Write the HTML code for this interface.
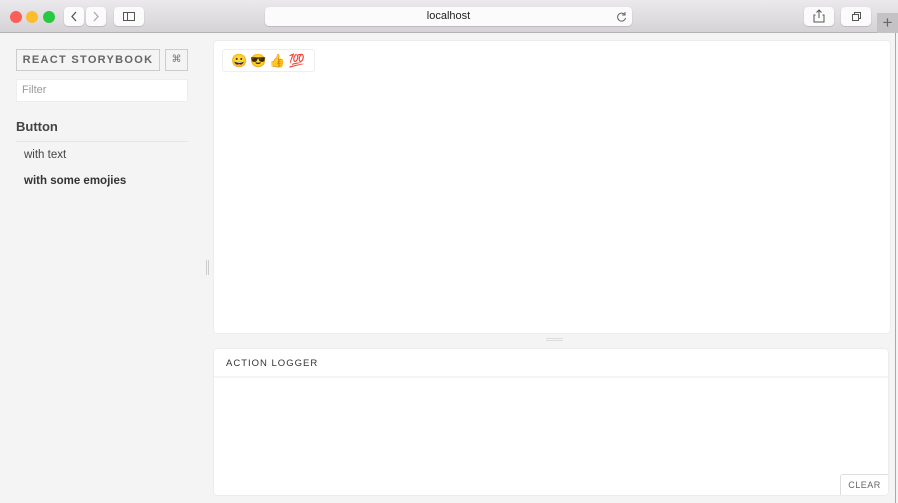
<!DOCTYPE html>
<html><head><style>
*{box-sizing:border-box;margin:0;padding:0}
body{width:898px;height:503px;overflow:hidden;background:#f4f4f4;font-family:"Liberation Sans",sans-serif;position:relative}
.tb{position:absolute;left:0;top:0;width:898px;height:33px;background:linear-gradient(#ebe9eb,#d5d3d5);border-bottom:1px solid #b4b2b4}
.dot{position:absolute;top:11px;width:12px;height:12px;border-radius:50%}
.btn{position:absolute;top:7px;height:19px;background:#fbfbfb;border-radius:4px;box-shadow:0 0.5px 1px rgba(0,0,0,.25)}
.abs{position:absolute}
</style></head><body>
<div class="tb">
<div class="dot" style="left:10px;background:#fc5f57"></div>
<div class="dot" style="left:26px;background:#fdbc2e"></div>
<div class="dot" style="left:43px;background:#28c840"></div>
<div class="btn" style="left:64px;width:20px"><svg width="20" height="19"><path d="M12 5l-4 4.5 4 4.5" stroke="#555" stroke-width="1.3" fill="none"/></svg></div>
<div class="btn" style="left:86px;width:20px"><svg width="20" height="19"><path d="M8 5l4 4.5-4 4.5" stroke="#aaa" stroke-width="1.3" fill="none"/></svg></div>
<div class="btn" style="left:114px;width:30px"><svg width="30" height="19"><rect x="9.5" y="5.5" width="11" height="8" fill="none" stroke="#555"/><line x1="13.5" y1="5.5" x2="13.5" y2="13.5" stroke="#555"/></svg></div>
<div class="btn" style="left:265px;width:367px;font-size:11px;text-align:center;line-height:19px;color:#222">localhost
<svg class="abs" style="right:4px;top:3px" width="13" height="13"><path d="M10 5A4 4 0 1 0 10.5 8" stroke="#666" fill="none"/><path d="M10 2v3h-3" stroke="#666" fill="none"/></svg></div>
<div class="btn" style="left:804px;width:30px"><svg width="30" height="19"><path d="M11.5 8h-1.5v7h10v-7h-1.5M15 3v8M12.5 5.5L15 3l2.5 2.5" stroke="#555" fill="none"/></svg></div>
<div class="btn" style="left:841px;width:30px"><svg width="30" height="19"><rect x="11.5" y="7.5" width="6" height="6" fill="none" stroke="#555"/><path d="M13.5 7.5v-2h6v6h-2" stroke="#555" fill="none"/></svg></div>
<div class="abs" style="left:877px;top:13px;width:21px;height:20px;background:#c4c2c4;color:#666;font-size:17px;text-align:center;line-height:19px">+</div>
</div>
<div class="abs" style="left:16px;top:49px;width:144px;height:22px;border:1px solid #ccc;color:#666;font-size:11px;font-weight:bold;letter-spacing:1.3px;text-align:center;line-height:20px">REACT STORYBOOK</div>
<div class="abs" style="left:165px;top:49px;width:23px;height:22px;border:1px solid #ccc;color:#777;font-size:10px;text-align:center;line-height:20px">⌘</div>
<div class="abs" style="left:16px;top:79px;width:172px;height:23px;background:#fff;border:1px solid #eee;color:#999;font-size:11px;padding-left:5px;line-height:21px">Filter</div>
<div class="abs" style="left:16px;top:119px;font-size:13px;font-weight:bold;color:#444">Button</div>
<div class="abs" style="left:16px;top:141px;width:172px;height:1px;background:#e6e6e6"></div>
<div class="abs" style="left:24px;top:149px;font-size:11.5px;color:#444">with text</div>
<div class="abs" style="left:24px;top:175px;font-size:11.5px;font-weight:bold;color:#333">with some emojies</div>
<div class="abs" style="left:206px;top:260px;width:3px;height:15px;border-left:1px solid #ccc;border-right:1px solid #ccc"></div>
<div class="abs" style="left:214px;top:41px;width:676px;height:292px;background:#fff;border-radius:3px;box-shadow:0 0 1px rgba(0,0,0,.2)"></div>
<div class="abs" style="left:222px;top:49px;width:93px;height:23px;border:1px solid #eee;border-radius:3px;background:#fff;font-size:13px;line-height:21px;padding-left:8px;letter-spacing:3px;white-space:nowrap">😀😎👍💯</div>
<div class="abs" style="left:546px;top:338px;width:17px;height:3px;border-top:1px solid #ddd;border-bottom:1px solid #ddd"></div>
<div class="abs" style="left:214px;top:349px;width:674px;height:146px;background:#fff;border-radius:3px;box-shadow:0 0 1px rgba(0,0,0,.2)"></div>
<div class="abs" style="left:214px;top:376px;width:674px;height:2px;background:#f4f4f4"></div>
<div class="abs" style="left:226px;top:358px;font-size:9.5px;letter-spacing:1px;color:#333">ACTION LOGGER</div>
<div class="abs" style="left:840px;top:474px;width:48px;height:21px;border:1px solid #ddd;border-bottom:none;border-right:none;border-radius:3px 0 0 0;font-size:9px;color:#666;text-align:center;line-height:21px;letter-spacing:.5px">CLEAR</div>
<div class="abs" style="left:895px;top:33px;width:1px;height:470px;background:#aaa"></div>
</body></html>
